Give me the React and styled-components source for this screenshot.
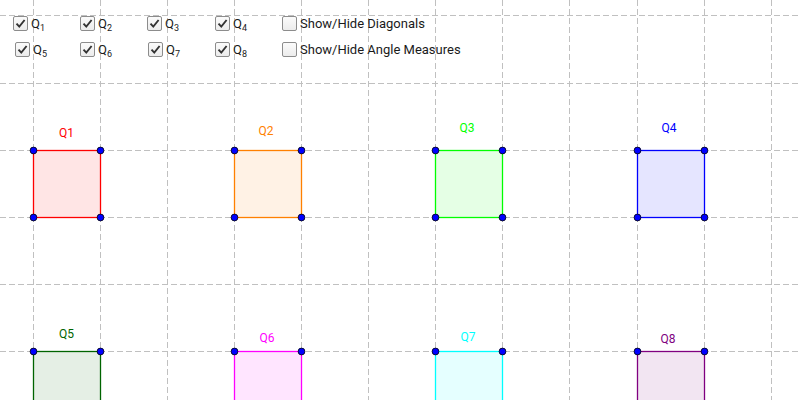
import styled, { createGlobalStyle } from "styled-components";

const GlobalStyle = createGlobalStyle`
  html, body {
    margin: 0;
    padding: 0;
    background: #ffffff;
    overflow: hidden;
  }
  body {
    font-family: Roboto, "Liberation Sans", sans-serif;
  }
`;

const Stage = styled.div`
  position: relative;
  width: 798px;
  height: 400px;
  overflow: hidden;
  background: #ffffff;
`;

const Canvas = styled.svg`
  display: block;
  width: 798px;
  height: 400px;
`;

// controls float over the drawing like GeoGebra checkboxes
const Controls = styled.div`
  position: absolute;
  left: 13px;
  top: 16px;
  display: grid;
  grid-template-columns: 67px 67px 68px 67px auto;
  grid-auto-rows: 26px;
  align-items: start;
`;

const Item = styled.label`
  display: flex;
  align-items: center;
  gap: 3px;
  height: 15px;
  padding-left: ${(p) => p.$shift || 0}px;
  font-size: 13px;
  color: #1a1a1a;
  white-space: nowrap;
  user-select: none;
`;

const Box = styled.span`
  box-sizing: border-box;
  width: 15px;
  height: 15px;
  border: 1px solid #8c8c8c;
  border-radius: 2px;
  background: linear-gradient(#fbfbfb, #ececec);
  display: flex;
  align-items: center;
  justify-content: center;
  flex-shrink: 0;
`;

const Sub = styled.sub`
  font-size: 9px;
  vertical-align: -3px;
  line-height: 0;
`;

const Check = () => (
  <svg width="11" height="11" viewBox="0 0 11 11">
    <path d="M1.5 5.6 L4.3 8.6 L9.6 2" fill="none" stroke="#333" strokeWidth="1.9" />
  </svg>
);

const CheckItem = ({ checked, shift, children }) => (
  <Item $shift={shift}>
    <Box>{checked && <Check />}</Box>
    <span>{children}</span>
  </Item>
);

const xs = [33, 100, 167, 234, 301, 368, 435, 502, 569, 637, 704, 771];
const ys = [15, 83, 150, 217, 284, 351];

const quads = [
  { n: 1, c: "#ff0000", x: 33, y: 150, lx: 66.5, ly: 137 },
  { n: 2, c: "#ff8000", x: 234, y: 150, lx: 266, ly: 135 },
  { n: 3, c: "#00ff00", x: 435, y: 150, lx: 467, ly: 131.5 },
  { n: 4, c: "#0000ff", x: 637, y: 150, lx: 669, ly: 131.5 },
  { n: 5, c: "#006400", x: 33, y: 351, lx: 66.5, ly: 338 },
  { n: 6, c: "#ff00ff", x: 234, y: 351, lx: 267, ly: 342 },
  { n: 7, c: "#00ffff", x: 435, y: 351, lx: 468, ly: 340.5 },
  { n: 8, c: "#800080", x: 637, y: 351, lx: 668, ly: 343 },
];

const S = 67;

const App = () => {
  return (
    <>
      <GlobalStyle />
      <Stage>
        <Canvas viewBox="0 0 798 400">
          <g stroke="#c0c0c0" strokeWidth="1" strokeDasharray="6 3">
            {xs.map((x) => (
              <line key={"v" + x} x1={x + 0.5} y1="0" x2={x + 0.5} y2="400" />
            ))}
            {ys.map((y) => (
              <line key={"h" + y} x1="0" y1={y + 0.5} x2="798" y2={y + 0.5} />
            ))}
          </g>
          {quads.map((q) => (
            <g key={q.n}>
              <rect
                x={q.x + 0.5}
                y={q.y + 0.5}
                width={S}
                height={S}
                fill={q.c}
                fillOpacity="0.1"
                stroke={q.c}
                strokeWidth="1.3"
              />
              <text
                x={q.lx}
                y={q.ly}
                fill={q.c}
                fontSize="12"
                fontFamily="Roboto, 'Liberation Sans', sans-serif"
                textAnchor="middle"
              >
                Q{q.n}
              </text>
              {[
                [q.x, q.y],
                [q.x + S, q.y],
                [q.x, q.y + S],
                [q.x + S, q.y + S],
              ].map(([cx, cy], i) => (
                <circle
                  key={i}
                  cx={cx + 0.5}
                  cy={cy + 0.5}
                  r="3.4"
                  fill="#0000ff"
                  stroke="#000"
                  strokeWidth="0.8"
                />
              ))}
            </g>
          ))}
        </Canvas>
        <Controls>
          <CheckItem checked>Q<Sub>1</Sub></CheckItem>
          <CheckItem checked>Q<Sub>2</Sub></CheckItem>
          <CheckItem checked>Q<Sub>3</Sub></CheckItem>
          <CheckItem checked>Q<Sub>4</Sub></CheckItem>
          <CheckItem>Show/Hide Diagonals</CheckItem>
          <CheckItem checked shift={2}>Q<Sub>5</Sub></CheckItem>
          <CheckItem checked>Q<Sub>6</Sub></CheckItem>
          <CheckItem checked shift={1}>Q<Sub>7</Sub></CheckItem>
          <CheckItem checked>Q<Sub>8</Sub></CheckItem>
          <CheckItem>Show/Hide Angle Measures</CheckItem>
        </Controls>
      </Stage>
    </>
  );
};

export default App;
